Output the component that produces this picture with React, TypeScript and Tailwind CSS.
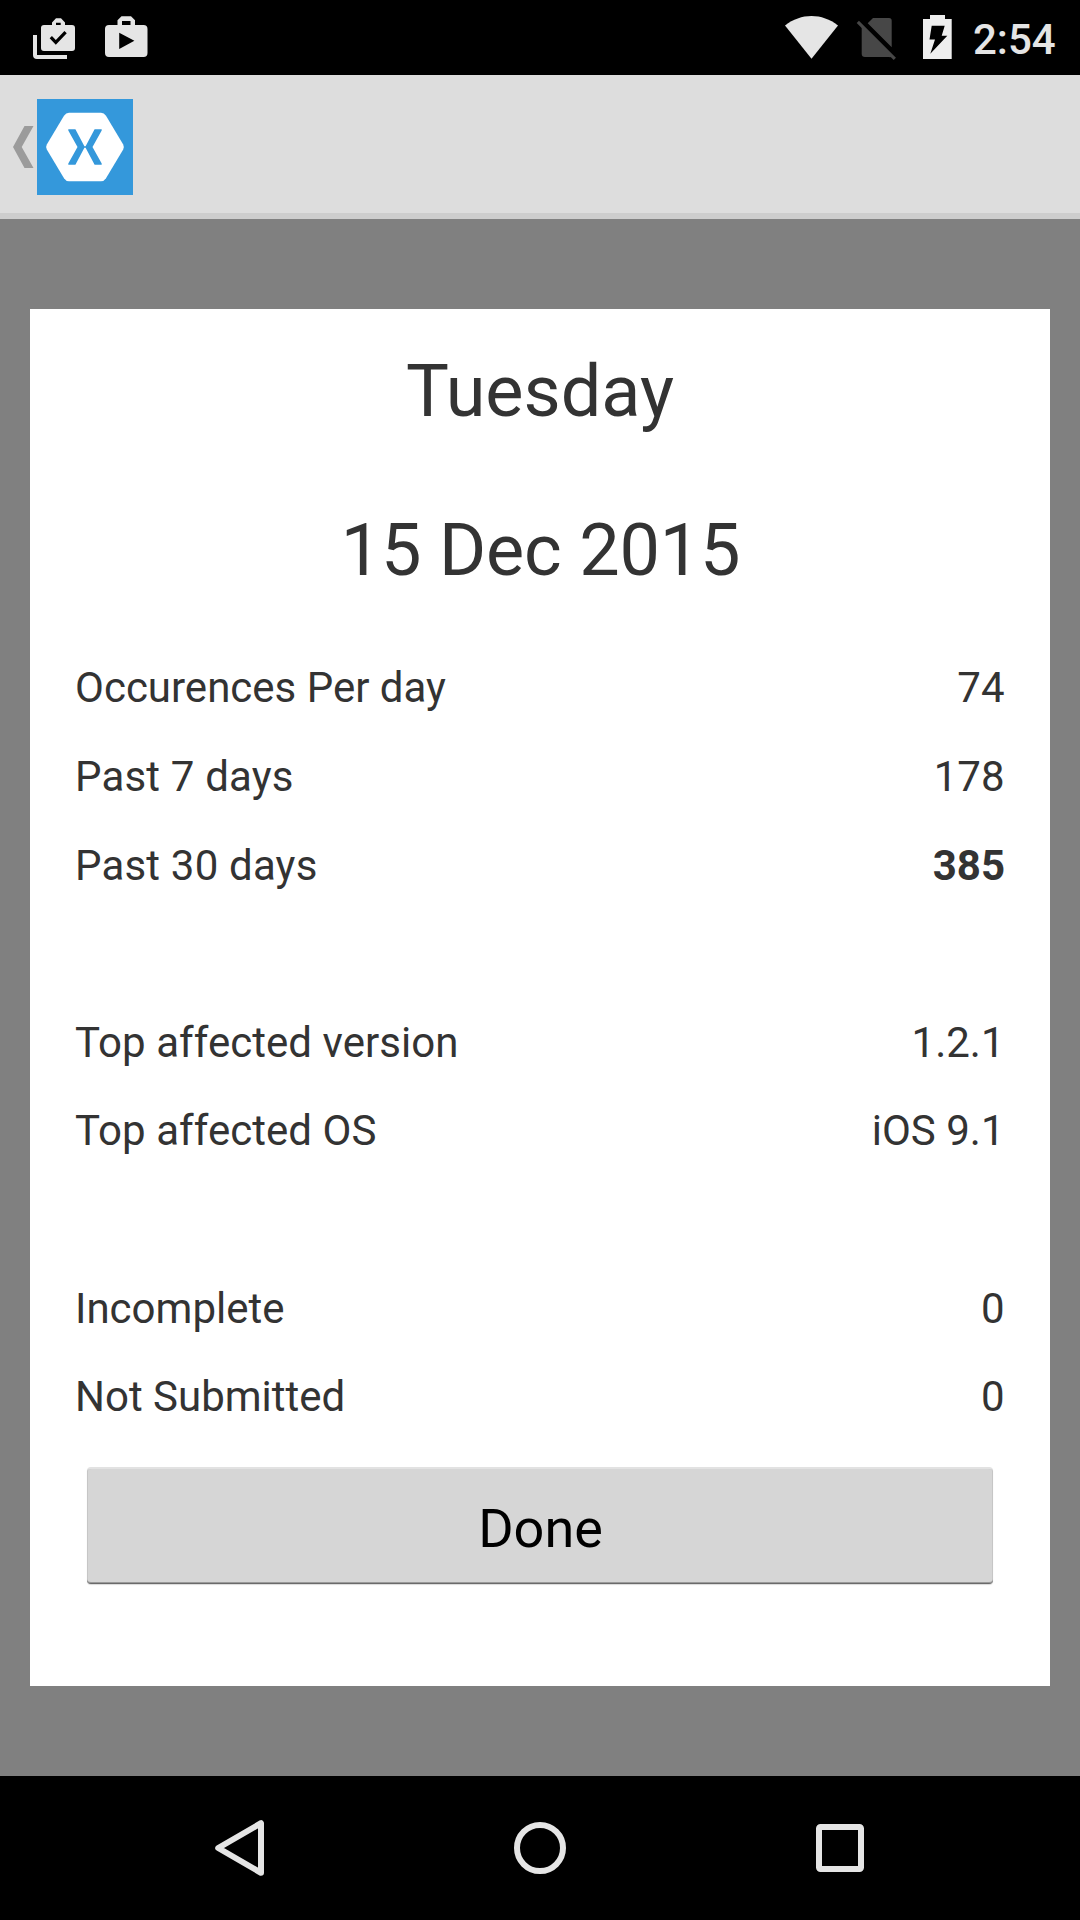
import React from "react";

type RowProps = { label: string; value: string; labelClassName?: string; bold?: boolean };

const groups: { className: string; rowClassName: string; rows: RowProps[] }[] = [
  {
    className: "",
    rowClassName: "h-[89px]",
    rows: [
      { label: "Occurences Per day", value: "74" },
      { label: "Past 7 days", value: "178", labelClassName: "tracking-[0.18px]" },
      { label: "Past 30 days", value: "385", labelClassName: "tracking-[0.18px]", bold: true },
    ],
  },
  {
    className: "mt-[88px]",
    rowClassName: "h-[88px]",
    rows: [
      { label: "Top affected version", value: "1.2.1", labelClassName: "tracking-[0.05px]" },
      { label: "Top affected OS", value: "iOS 9.1", labelClassName: "tracking-[0.05px]" },
    ],
  },
  {
    className: "mt-[90px]",
    rowClassName: "h-[88px]",
    rows: [
      { label: "Incomplete", value: "0" },
      { label: "Not Submitted", value: "0" },
    ],
  },
];

function StatusBar() {
  return (
    <header className="flex h-[75px] items-start justify-between bg-black">
      <svg width="200" height="75" viewBox="0 0 200 75" fill="#e5e5e5">
        <path d="M33 35h4v20h30v4H37a4 4 0 0 1-4-4z" />
        <path fillRule="evenodd" d="M52 25v-2.500l4-4.200h5l4 4.200v2.500h7a3 3 0 0 1 3 3v20a3 3 0 0 1-3 3H44a3 3 0 0 1-3-3v-20a3 3 0 0 1 3-3zM56 25h4.700v-2.200H56z" />
        <path d="M50.800 37.200l5 5.200 9.800-10.300" fill="none" stroke="#000" strokeWidth="3.200" />
        <path fillRule="evenodd" d="M117.500 25v-4.800l4-4h9.500l4 4V25h8.500a4 4 0 0 1 4 4v24a4 4 0 0 1-4 4H109a4 4 0 0 1-4-4V29a4 4 0 0 1 4-4zM122 25h8.500v-4H122zM119.200 32.800V49l15.200-8.200z" />
      </svg>
      <div className="flex">
        <svg className="shrink-0" width="210" height="75" viewBox="0 0 210 75">
          <path d="M25 25.600C41 12.900 62 12.900 78 25.600L51.500 58.700z" fill="#e5e5e5" />
          <path d="M113 18h16a2.700 2.700 0 0 1 2.700 2.700v26.600L107.700 23.300zM101.700 26L132 56.300A3 3 0 0 1 129 57H105a3.300 3.300 0 0 1-3.300-3.300z" fill="#474747" />
          <path d="M97.800 21.800L134.800 58.800" stroke="#474747" strokeWidth="3.200" />
          <path fillRule="evenodd" d="M170 15H185v4h6.700v40H163V19h7zM171.700 25.700L169.500 39.500h5.500L170.300 53.800L187.300 35.800h-5.600L184.700 25.700z" fill="#eee" />
        </svg>
        <div className="w-[110px] pl-[3px] text-[42px] leading-[80px] font-medium text-[#e5e5e5]">2:54</div>
      </div>
    </header>
  );
}

function ActionBar() {
  return (
    <div className="flex h-[144px] items-center border-b-[6px] border-[#cdcdcd] bg-[#ddd] pt-[6px]">
      <svg className="ml-[13px]" width="21" height="42" viewBox="0 0 21 42" fill="#9b9b9b">
        <path d="M11.500 0H20.500L8.700 21L20.500 42H11.500L0 21z" />
      </svg>
      <svg className="ml-[3px]" width="96" height="96" viewBox="0 0 96 96">
        <rect width="96" height="96" fill="#3498db" />
        <path d="M32 13.700H64Q67 13.700 69 16.800L86.200 45.500Q87.500 48 86.200 50.500L69 79.200Q67 82.300 64 82.300H32Q29 82.300 27 79.200L9.800 50.500Q8.500 48 9.800 45.500L27 16.800Q29 13.700 32 13.700z" fill="#fff" />
        <path d="M31.300 30.300h7.100L47.400 47.300h1.200L57.600 30.300h7.100v1.200L55.500 48l9.200 16.500v1.200h-7.100L48.600 48.700h-1.200L38.400 65.700h-7.100v-1.200L40.500 48l-9.200-16.500z" fill="#3498db" />
      </svg>
    </div>
  );
}

function NavBar() {
  return (
    <nav className="flex h-36 items-center justify-center gap-[244px] bg-black" aria-label="System navigation">
      <svg width="56" height="60" viewBox="0 0 56 60" fill="none" stroke="#e5e5e5" strokeWidth="6" strokeLinejoin="round">
        <path d="M49 5.200V54.800L6.200 30z" />
      </svg>
      <svg width="56" height="60" viewBox="0 0 56 60" fill="none" stroke="#e5e5e5" strokeWidth="6">
        <circle cx="28" cy="30" r="23" />
      </svg>
      <svg width="56" height="60" viewBox="0 0 56 60" fill="none" stroke="#e5e5e5" strokeWidth="6">
        <rect x="7" y="9" width="42" height="42" rx="1.500" />
      </svg>
    </nav>
  );
}

export default function App() {
  return (
    <div className="flex h-[1920px] w-[1080px] flex-col overflow-hidden bg-[#808080] font-[Roboto,sans-serif]">
      <StatusBar />
      <ActionBar />
      <main className="flex-1 px-[30px] py-[90px]">
        <section className="flex h-full flex-col bg-white px-[45px] pt-[41px] text-[42px] leading-[89px] text-[#333]">
          <h1 className="text-center text-[72px] leading-[84px]">Tuesday</h1>
          <h2 className="mt-[75px] pl-[1px] text-center text-[72px] leading-[84px] tracking-[-0.2px]">15 Dec 2015</h2>
          <div className="mt-[50px] flex flex-col">
            {groups.map((group, i) => (
              <div key={i} className={group.className}>
                {group.rows.map((row) => (
                  <div key={row.label} className={`flex justify-between ${group.rowClassName}`}>
                    <span className={row.labelClassName}>{row.label}</span>
                    <span className={row.bold ? "font-bold" : "mr-[0.5px]"}>{row.value}</span>
                  </div>
                ))}
              </div>
            ))}
          </div>
          <button className="mx-[12px] mt-[27px] h-[117px] rounded-[4px] border-t-2 border-b border-t-[#e2e2e2] border-b-[#6a6a6a] bg-[#d6d6d6] pt-[6px] pl-[1px] text-[54px] leading-[64px] text-black shadow-[0_1px_1px_rgba(0,0,0,0.15),inset_0_-1px_0_#9a9a9a,inset_1px_0_0_#c6c6c6,inset_-1px_0_0_#c6c6c6]">
            Done
          </button>
        </section>
      </main>
      <NavBar />
    </div>
  );
}
